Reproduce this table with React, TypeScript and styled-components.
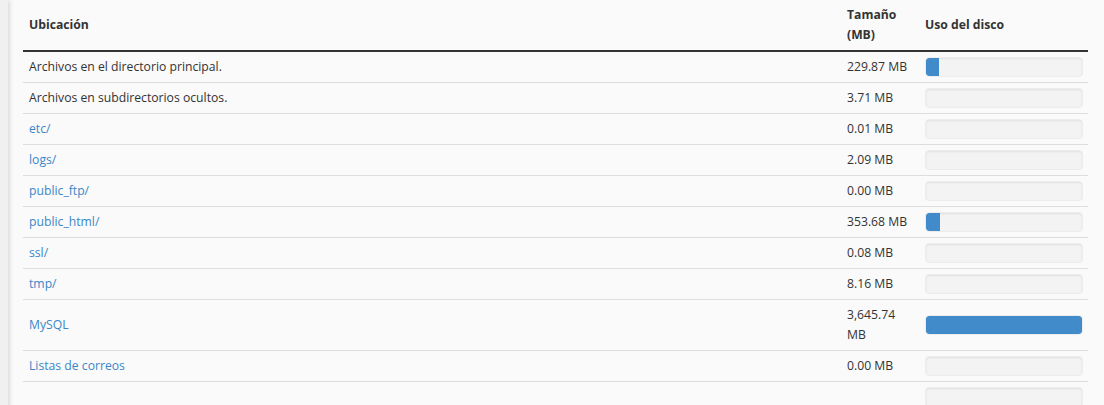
import React from 'react';
import styled, { createGlobalStyle } from 'styled-components';

const GlobalStyle = createGlobalStyle`
  html, body {
    margin: 0;
    padding: 0;
    background: #fafafa;
  }
  body {
    font-family: "Open Sans", "Liberation Sans", sans-serif;
    font-size: 12.2px;
    color: #333;
  }
`;

const Page = styled.div`
  display: flex;
  min-height: 405px;
  background: #fafafa;
`;

const SideEdge = styled.div`
  width: 8px;
  flex: none;
  background: #f0f0f0;
  box-shadow: 2px 0 4px rgba(0, 0, 0, 0.12);
`;

const Content = styled.div`
  flex: 1;
  padding: 0 16px 0 15px;
  overflow: hidden;
`;

const Table = styled.table`
  width: 100%;
  border-collapse: collapse;
  line-height: 20px;
`;

const HeadCell = styled.th<{ width?: number }>`
  text-align: left;
  font-weight: 700;
  vertical-align: middle;
  height: 40px;
  padding: 5px 5px 5px 6px;
  border-bottom: 2px solid #333;
  width: ${p => (p.width ? `${p.width}px` : 'auto')};
`;

const Row = styled.tr`
  border-bottom: 1px solid #ddd;
`;

const Cell = styled.td`
  padding: 5px 5px 5px 6px;
  vertical-align: middle;
`;

const Link = styled.a`
  color: #3a87c8;
  text-decoration: none;
`;

const Progress = styled.div`
  height: 20px;
  border-radius: 4px;
  background: #f3f3f3;
  box-shadow: inset 0 1px 2px rgba(0, 0, 0, 0.08);
  border: 1px solid #ececec;
  box-sizing: border-box;
  overflow: hidden;
`;

const ProgressFill = styled.div`
  height: 100%;
  background: #428bca;
  border-radius: 3px 0 0 3px;
`;

interface Entry {
  name: string;
  link?: boolean;
  size?: string;
  percent?: number;
}

const entries: Entry[] = [
  { name: 'Archivos en el directorio principal.', size: '229.87 MB', percent: 8.2 },
  { name: 'Archivos en subdirectorios ocultos.', size: '3.71 MB', percent: 0 },
  { name: 'etc/', link: true, size: '0.01 MB', percent: 0 },
  { name: 'logs/', link: true, size: '2.09 MB', percent: 0 },
  { name: 'public_ftp/', link: true, size: '0.00 MB', percent: 0 },
  { name: 'public_html/', link: true, size: '353.68 MB', percent: 8.9 },
  { name: 'ssl/', link: true, size: '0.08 MB', percent: 0 },
  { name: 'tmp/', link: true, size: '8.16 MB', percent: 0 },
  { name: 'MySQL', link: true, size: '3,645.74 MB', percent: 100 },
  { name: 'Listas de correos', link: true, size: '0.00 MB', percent: 0 },
  { name: '', size: '', percent: 0 },
];

const UsageBar = ({ percent }: { percent: number }) => (
  <Progress>
    {percent > 0 && (
      <ProgressFill
        style={{
          width: `${percent}%`,
          borderRadius: percent >= 100 ? 3 : '3px 0 0 3px',
        }}
      />
    )}
  </Progress>
);

export default function App() {
  return (
    <>
      <GlobalStyle />
      <Page>
        <SideEdge />
        <Content>
          <Table>
            <thead>
              <tr>
                <HeadCell>Ubicación</HeadCell>
                <HeadCell width={67}>Tamaño (MB)</HeadCell>
                <HeadCell width={158}>Uso del disco</HeadCell>
              </tr>
            </thead>
            <tbody>
              {entries.map((e, i) => (
                <Row key={i}>
                  <Cell>{e.link ? <Link href="#">{e.name}</Link> : e.name}</Cell>
                  <Cell>{e.size}</Cell>
                  <Cell>
                    <UsageBar percent={e.percent || 0} />
                  </Cell>
                </Row>
              ))}
            </tbody>
          </Table>
        </Content>
      </Page>
    </>
  );
}
